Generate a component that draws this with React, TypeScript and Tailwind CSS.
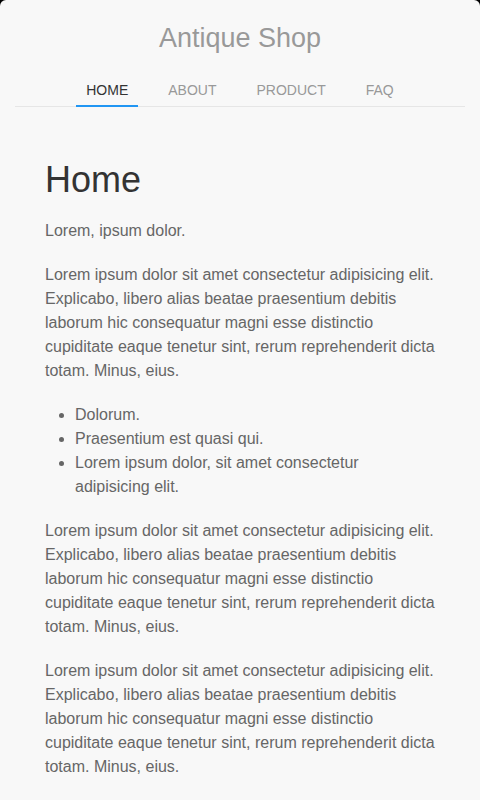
import React from "react";

const navItems = ["HOME", "ABOUT", "PRODUCT", "FAQ"];

const lorem =
  "Lorem ipsum dolor sit amet consectetur adipisicing elit. Explicabo, libero alias beatae praesentium debitis laborum hic consequatur magni esse distinctio cupiditate eaque tenetur sint, rerum reprehenderit dicta totam. Minus, eius.";

export default function App() {
  return (
    <div className="min-h-[800px] bg-black" style={{ fontFamily: '"Liberation Sans", Arial, sans-serif' }}>
      <div className="min-h-[800px] bg-[#f8f8f8] rounded-t-[6px]">
        {/* Header */}
        <header className="px-[15px]">
          <h1 className="pt-[20px] text-center text-[27px] leading-[36px] text-[#999]">Antique Shop</h1>
          <nav className="mt-[24px] flex justify-center gap-[20px] border-b border-[#e6e6e6]">
            {navItems.map((item, i) => (
              <a
                key={item}
                href="#"
                className={
                  i === 0
                    ? "px-[10px] pb-[5px] text-[14px] leading-[20px] text-[#333] border-b-2 border-[#2196f3] -mb-px"
                    : "px-[10px] pb-[5px] text-[14px] leading-[20px] text-[#999] border-b-2 border-transparent -mb-px"
                }
              >
                {item}
              </a>
            ))}
          </nav>
        </header>

        {/* Content */}
        <main className="px-[45px] pt-[51px] text-[16px] leading-[24px] text-[#666]">
          <h2 className="text-[36px] leading-[43px] text-[#333] mb-[18px]">Home</h2>
          <p className="mb-[20px]">Lorem, ipsum dolor.</p>
          <p className="mb-[20px]">{lorem}</p>
          <ul className="mb-[20px] list-disc pl-[30px]">
            <li>Dolorum.</li>
            <li>Praesentium est quasi qui.</li>
            <li>Lorem ipsum dolor, sit amet consectetur adipisicing elit.</li>
          </ul>
          <p className="mb-[20px]">{lorem}</p>
          <p className="mb-[20px]">{lorem}</p>
        </main>
      </div>
    </div>
  );
}
